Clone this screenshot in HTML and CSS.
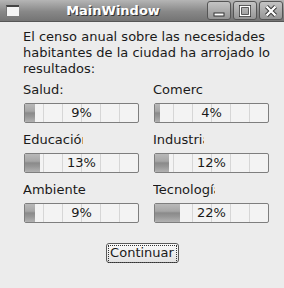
FILE: index.html
```html
<!DOCTYPE html>
<html lang="es">
<head>
  <meta charset="UTF-8" />
  <title>MainWindow</title>
  <link rel="stylesheet" href="styles.css">
</head>
<body>
  <div class="titlebar">
    <div class="app-icon"></div>
    <div class="title">MainWindow</div>
    <div class="wm-buttons">
      <div class="wm-btn">
        <svg width="14" height="12" viewBox="0 0 14 12"><rect x="2" y="8" width="10" height="3" fill="#fff" stroke="#333" stroke-width="1"/></svg>
      </div>
      <div class="wm-btn">
        <svg width="14" height="12" viewBox="0 0 14 12"><rect x="2.5" y="1.5" width="9" height="9" fill="none" stroke="#333" stroke-width="3"/><rect x="2.5" y="1.5" width="9" height="9" fill="none" stroke="#fff" stroke-width="1.4"/></svg>
      </div>
      <div class="wm-btn">
        <svg width="14" height="12" viewBox="0 0 14 12"><path d="M2.5 1.5 L11.5 10.5 M11.5 1.5 L2.5 10.5" stroke="#333" stroke-width="4.2"/><path d="M2.5 1.5 L11.5 10.5 M11.5 1.5 L2.5 10.5" stroke="#fff" stroke-width="2.4"/></svg>
      </div>
    </div>
  </div>

  <div class="content">
    <p class="intro">El censo anual sobre las necesidades habitantes de la ciudad ha arrojado lo resultados:</p>

    <div class="grid">
      <div class="item">
        <div class="label">Salud:</div>
        <div class="bar"><div class="fill" style="width: 9%"></div><span class="pct">9%</span></div>
      </div>
      <div class="item">
        <div class="label clip-50">Comercio</div>
        <div class="bar"><div class="fill" style="width: 4%"></div><span class="pct">4%</span></div>
      </div>
      <div class="item">
        <div class="label clip-60">Educación</div>
        <div class="bar"><div class="fill" style="width: 13%"></div><span class="pct">13%</span></div>
      </div>
      <div class="item">
        <div class="label clip-51">Industrial</div>
        <div class="bar"><div class="fill" style="width: 12%"></div><span class="pct">12%</span></div>
      </div>
      <div class="item">
        <div class="label">Ambiente</div>
        <div class="bar"><div class="fill" style="width: 9%"></div><span class="pct">9%</span></div>
      </div>
      <div class="item">
        <div class="label clip-62">Tecnología</div>
        <div class="bar"><div class="fill" style="width: 22%"></div><span class="pct">22%</span></div>
      </div>
    </div>

    <div class="actions">
      <button class="btn"><span class="focus">Continuar</span></button>
    </div>
  </div>
</body>
</html>
```

FILE: styles.css
```css
body {
  margin: 0;
  width: 284px;
  height: 288px;
  background: #ececec;
  font-family: "DejaVu Sans", sans-serif;
  font-size: 13px;
  color: #1a1a1a;
  overflow: hidden;
}
.titlebar {
  height: 21px;
  display: flex;
  align-items: center;
  background: linear-gradient(#b5b5b5, #888 55%, #747474);
  border-bottom: 1px solid #555;
}
.app-icon {
  width: 12px;
  height: 9px;
  margin-left: 6px;
  background: #f4f4f4;
  border-top: 2px solid #444;
  border-left: 1px solid #777;
}
.title {
  flex: 1;
  text-align: center;
  color: #fff;
  font-weight: bold;
  font-size: 13px;
  text-shadow: 1px 1px 0 #333;
}
.wm-buttons {
  display: flex;
  gap: 2px;
  margin-right: 1px;
}
.wm-btn {
  width: 22px;
  height: 17px;
  display: flex;
  align-items: center;
  justify-content: center;
  border: 1px solid #555;
  border-radius: 3px;
  background: linear-gradient(#c4c4c4, #959595);
}
.content {
  padding: 7px 15px 0 23px;
}
.intro {
  margin: 0;
  line-height: 16px;
  width: 254px;
}
.grid {
  display: grid;
  grid-template-columns: 116px 116px;
  column-gap: 14px;
  row-gap: 9px;
  margin-top: 5px;
}
.label {
  line-height: 16px;
  white-space: nowrap;
  overflow: hidden;
  margin-bottom: 5px;
}
.clip-50 { width: 50px; }
.clip-51 { width: 51px; }
.clip-60 { width: 60px; }
.clip-62 { width: 62px; }
.bar {
  position: relative;
  height: 18px;
  margin-left: 1px;
  border: 1px solid #7e7e7e;
  border-radius: 2px;
  background-color: #f3f3f3;
  background-image: repeating-linear-gradient(90deg, transparent 0 18px, #d6d6d6 18px 19px);
  overflow: hidden;
}
.fill {
  height: 100%;
  background: linear-gradient(#b9b9b9, #a6a6a6 40%, #8a8a8a 50%, #979797 70%, #b2b2b2);
}
.pct {
  position: absolute;
  inset: 0;
  text-align: center;
  line-height: 18px;
  color: #1a1a1a;
}
.actions {
  display: flex;
  justify-content: center;
  margin-top: 20px;
  padding-right: 8px;
}
.btn {
  width: 73px;
  height: 20px;
  padding: 1px;
  border: 1px solid #5a5a5a;
  border-radius: 3px;
  background: linear-gradient(#fafafa, #e2e2e2);
  font-family: "DejaVu Sans", sans-serif;
  font-size: 13px;
  color: #1a1a1a;
}
.focus {
  display: block;
  height: 100%;
  line-height: 14px;
  border: 1px dotted #333;
}
```
